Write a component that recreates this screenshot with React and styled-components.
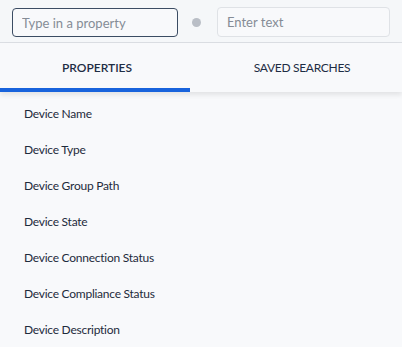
import React from "react";
import styled, {createGlobalStyle} from "styled-components";

const GlobalStyle = createGlobalStyle`
  body {
    margin: 0;
    background: #f8f9fb;
    font-family: "Lato", "Liberation Sans", sans-serif;
  }
`

const Page = styled.div`
  width: 402px;
  height: 347px;
  overflow: hidden;
  background: #f8f9fb;
`

const SearchBar = styled.div`
  height: 43px;
  box-sizing: border-box;
  padding: 7px 11px 0 12px;
  display: flex;
  align-items: flex-start;
  border-bottom: 1px solid #dcdfe4;
  background: #f5f7f9;
`

const Field = styled.input`
  box-sizing: border-box;
  height: ${p => p.$active ? "29px" : "30px"};
  margin-top: ${p => p.$active ? "1px" : "0"};
  width: ${p => p.$width}px;
  border: 1px solid ${p => p.$active ? "#3b4c63" : "#dfe2e6"};
  border-radius: 4px;
  background: #f8f9fb;
  padding: 0 10px 0 9px;
  font: 13px "Lato", "Liberation Sans", sans-serif;
  color: #1e2b3c;
  outline: none;

  &::placeholder {
    color: #858c96;
  }
`

const Dot = styled.span`
  width: 9px;
  height: 9px;
  border-radius: 50%;
  background: #b9bec6;
  margin: 11px 16px 0 14px;
  flex: none;
`

const Tabs = styled.div`
  display: flex;
  height: 49px;
  background: #f8f9fb;
  box-shadow: 0 3px 5px rgba(0, 0, 0, 0.09);
`

const Tab = styled.div`
  width: ${p => p.$width}px;
  box-sizing: border-box;
  display: flex;
  align-items: center;
  justify-content: center;
  padding: 4px 0 0 ${p => p.$shift || 0}px;
  font: ${p => p.$active ? 600 : 400} 12px "Lato", "Liberation Sans", sans-serif;
  letter-spacing: ${p => p.$active ? "0" : "-0.3px"};
  color: #1e2d44;
  border-bottom: 4px solid ${p => p.$active ? "#1863dc" : "transparent"};
`

const List = styled.ul`
  list-style: none;
  margin: 0;
  padding: 9px 0 0 24px;
`

const Item = styled.li`
  height: 36px;
  font: 12px/26px "Lato", "Liberation Sans", sans-serif;
  letter-spacing: -0.25px;
  color: #1e2b3c;
`

const properties = [
  "Device Name",
  "Device Type",
  "Device Group Path",
  "Device State",
  "Device Connection Status",
  "Device Compliance Status",
  "Device Description",
]

export default function App() {
  return (
    <Page>
      <GlobalStyle/>
      <SearchBar>
        <Field $active $width={166} placeholder="Type in a property" autoFocus/>
        <Dot/>
        <Field $width={173} placeholder="Enter text"/>
      </SearchBar>
      <Tabs>
        <Tab $active $width={190} $shift={4}>PROPERTIES</Tab>
        <Tab $width={212} $shift={12}>SAVED SEARCHES</Tab>
      </Tabs>
      <List>
        {properties.map(p => <Item key={p}>{p}</Item>)}
      </List>
    </Page>
  )
}
